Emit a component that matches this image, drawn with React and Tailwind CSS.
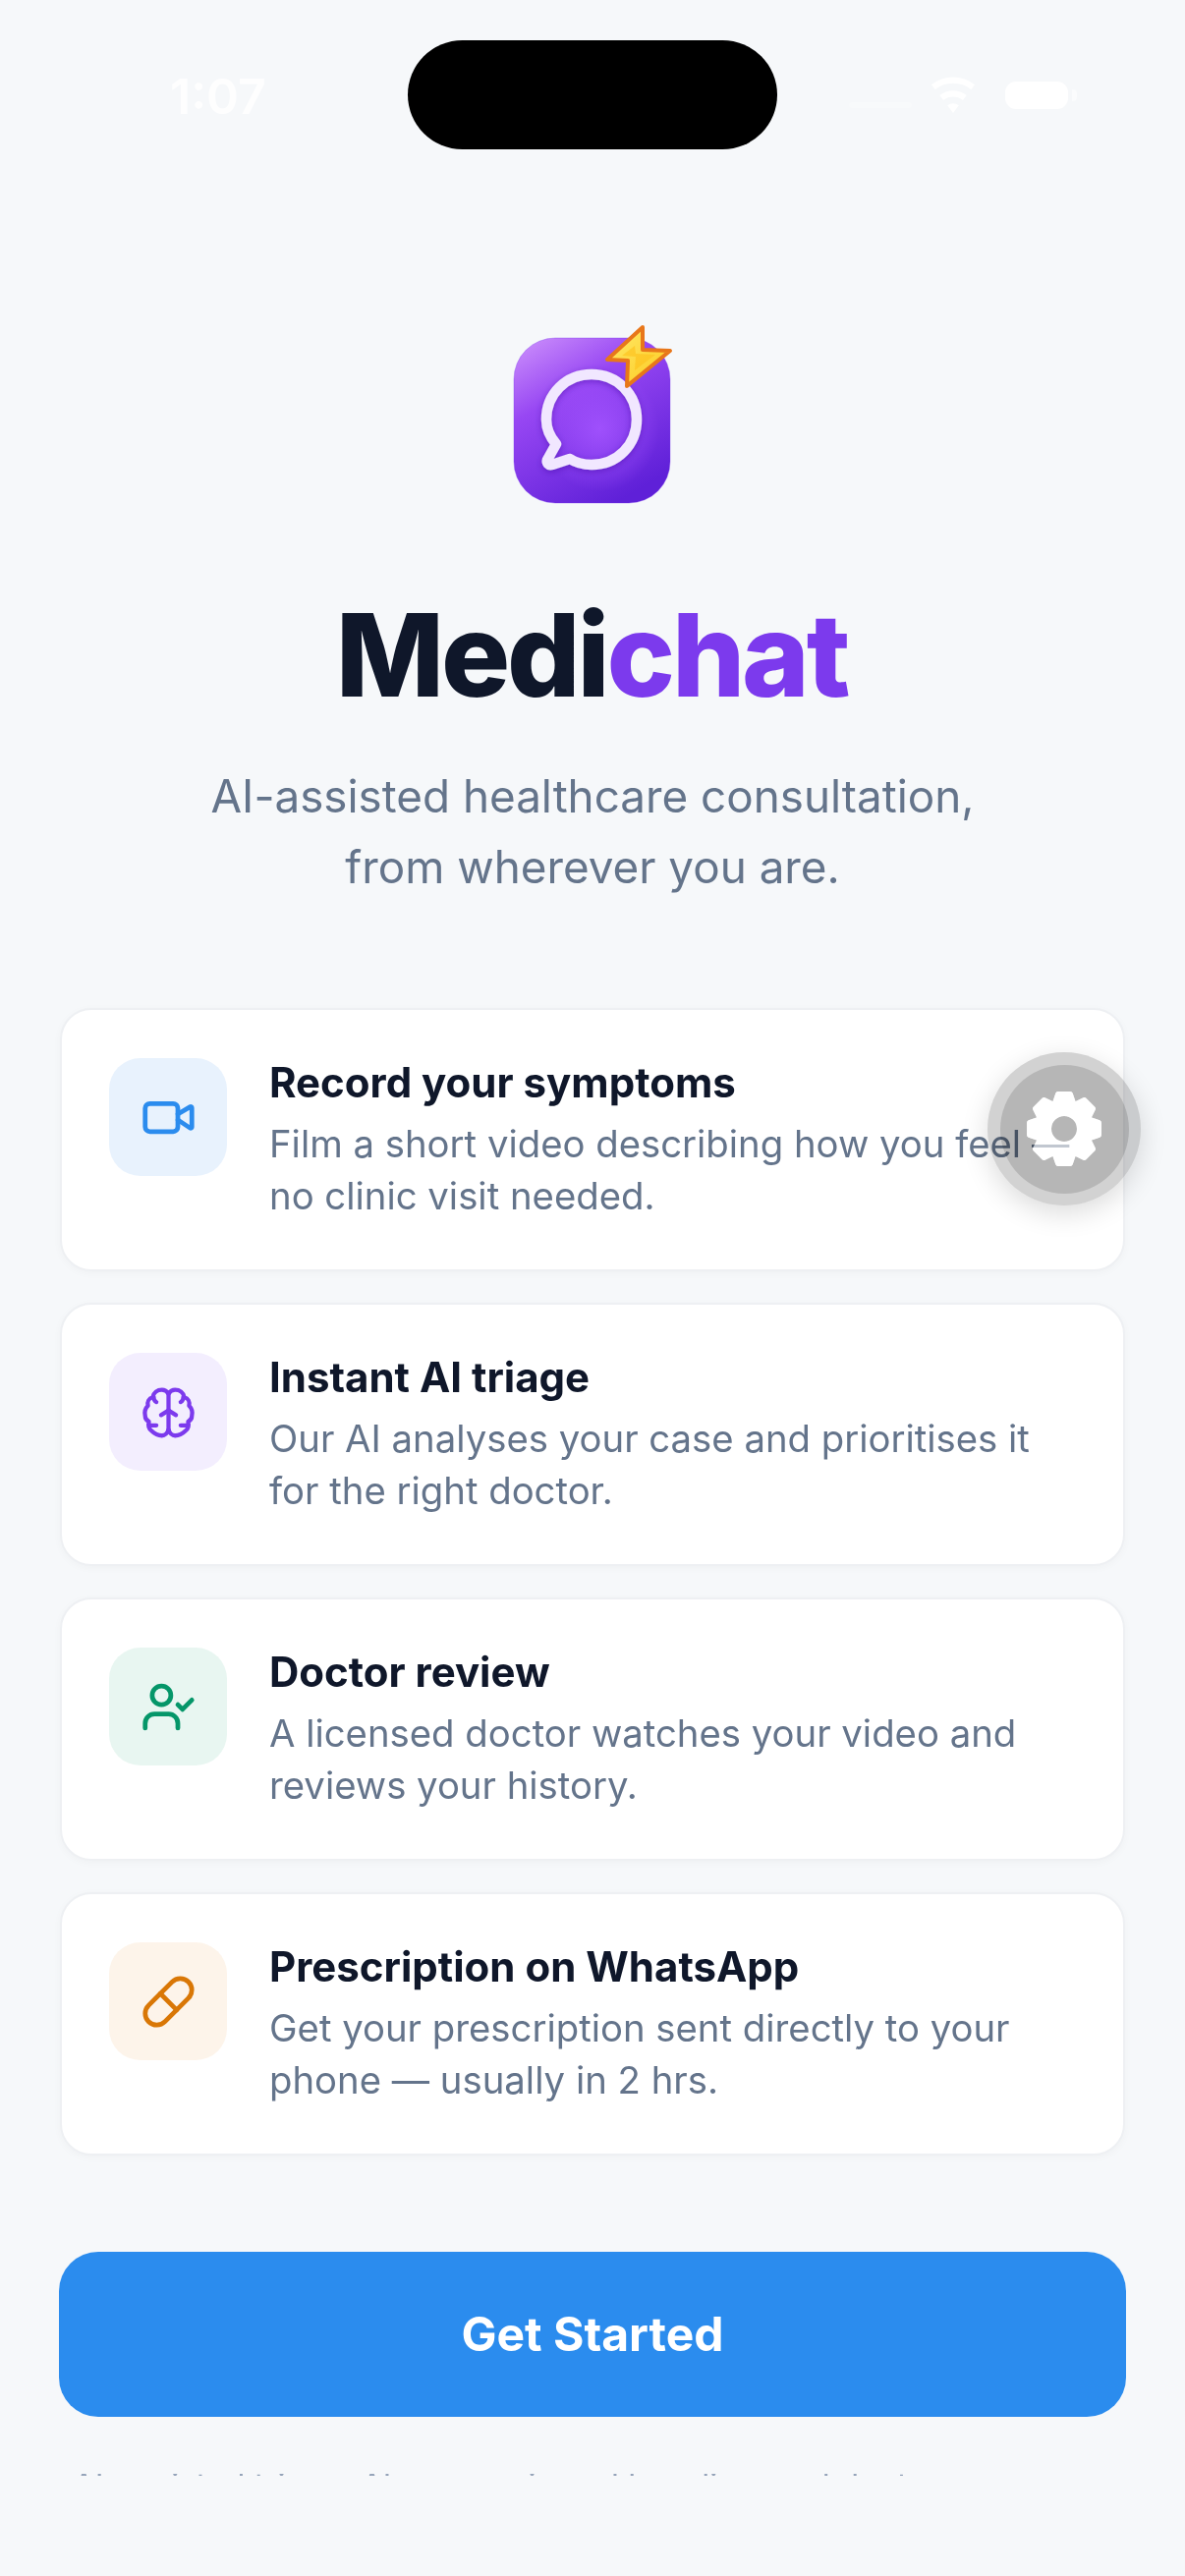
import { Video, UserCheck, Pill } from 'lucide-react'

// lucide's current brain differs from the one in the design, so drawn by hand
function BrainIcon({ className }) {
    const half = 'M30 10 C28 7 26 6 23 6 C18 6 14 9 13 14 C9 15 7 19 8 23 C5 26 4 30 5 34 C5 37 7 39 9 40 C8 44 9 48 12 50 C15 53 19 55 23 55 C26 55 29 52 30 49 M17 44 H11 M14 13 C14 16 15 18 17 19 M22 33 L30 28'
    return (
        <svg viewBox="0 0 60 60" className={className} fill="none" stroke="currentColor" strokeWidth="4.5" strokeLinecap="round" strokeLinejoin="round">
            <path d={half} />
            <path d={half} transform="matrix(-1 0 0 1 60 0)" />
            <path d="M30 10 V49" />
        </svg>
    )
}

const steps = [
    { title: 'Record your symptoms', desc: 'Film a short video describing how you feel — no clinic visit needed.', Icon: Video, box: 'bg-[#e8f2fd]', color: 'text-[#2b8cee]' },
    { title: 'Instant AI triage', desc: 'Our AI analyses your case and prioritises it for the right doctor.', Icon: BrainIcon, box: 'bg-[#f3eefe]', color: 'text-[#7c3aed]' },
    { title: 'Doctor review', desc: 'A licensed doctor watches your video and reviews your history.', Icon: UserCheck, box: 'bg-[#e8f6f1]', color: 'text-[#059669]' },
    { title: 'Prescription on WhatsApp', desc: 'Get your prescription sent directly to your phone — usually in 2 hrs.', Icon: Pill, box: 'bg-[#fdf4ea]', color: 'text-[#d97706]' },
]

// 8 tooth gear, built once from polar points
function gearPath(cx, cy) {
    const pts = []
    for (let i = 0; i < 8; i++) {
        const a = (i * Math.PI) / 4 - Math.PI / 2
        const d = Math.PI / 8
        pts.push([a - d * 0.95, 27], [a - d * 0.45, 36], [a + d * 0.45, 36], [a + d * 0.95, 27])
    }
    const outer = pts.map(([a, r], i) => `${i ? 'L' : 'M'}${(cx + r * Math.cos(a)).toFixed(2)} ${(cy + r * Math.sin(a)).toFixed(2)}`).join(' ') + ' Z'
    return `${outer} M${cx + 15.5} ${cy} A15.5 15.5 0 1 0 ${cx - 15.5} ${cy} A15.5 15.5 0 1 0 ${cx + 15.5} ${cy} Z`
}

function Gear({ className }) {
    return (
        <svg viewBox="0 0 80 80" className={className}>
            <path d={gearPath(40, 40)} fill="#fff" fillRule="evenodd" stroke="#fff" strokeWidth="5" strokeLinejoin="round" />
        </svg>
    )
}

function Logo() {
    return (
        <svg viewBox="0 0 170 185" className="w-[170px] h-[185px]">
            <defs>
                <linearGradient id="tile" x1="0.1" y1="0" x2="0.65" y2="1">
                    <stop offset="0" stopColor="#c98bfb" />
                    <stop offset="0.35" stopColor="#9747f3" />
                    <stop offset="1" stopColor="#5f20d8" />
                </linearGradient>
                <radialGradient id="glow" cx="0.55" cy="0.55" r="0.38">
                    <stop offset="0" stopColor="#9f50fc" />
                    <stop offset="1" stopColor="#9f50fc" stopOpacity="0" />
                </radialGradient>
                <linearGradient id="bolt" x1="0" y1="0" x2="1" y2="1">
                    <stop offset="0" stopColor="#ffeb6b" />
                    <stop offset="1" stopColor="#fcc81c" />
                </linearGradient>
                <filter id="ringShadow" x="-20%" y="-20%" width="140%" height="140%">
                    <feDropShadow dx="0" dy="2" stdDeviation="3" floodColor="#3b0f9e" floodOpacity="0.45" />
                </filter>
            </defs>
            <rect x="3" y="14" width="159" height="168" rx="42" fill="url(#tile)" stroke="#7c3aed" strokeOpacity="0.35" />
            <rect x="3" y="14" width="159" height="168" rx="42" fill="url(#glow)" />
            <path
                d="M82 51 C108 51 128 71 128 97 C128 123 108 143 82 143 C73 143 66 141 60 137 L42 143 C38 144 36 141 37 138 L46 122 C40 115 36 106 36 97 C36 71 56 51 82 51 Z"
                fill="none"
                stroke="#f1e7ff"
                strokeWidth="10.5"
                strokeLinejoin="round"
                filter="url(#ringShadow)"
            />
            <path
                d="M134 3 L98 36 L119 37 L118 63 L162 27 L134 26 Z"
                fill="url(#bolt)"
                stroke="#e8771a"
                strokeWidth="4"
                strokeLinejoin="round"
            />
            <path d="M126 22 L113 32 L127 33 L126 47 L147 31 L127 30 Z" fill="#fdc01a" opacity="0.6" />
        </svg>
    )
}

function StatusBar() {
    return (
        <div className="h-[198px] relative shrink-0">
            <div className="absolute left-[415px] top-[41px] w-[376px] h-[111px] bg-black rounded-[56px]" />
            <span className="absolute left-[173px] top-[68px] text-[50px] leading-[60px] font-semibold text-white/90">1:07</span>
            <div className="absolute left-[864px] top-[104px] w-[64px] h-[6px] bg-white/25 rounded-sm" />
            <svg viewBox="0 0 24 24" className="absolute left-[943px] top-[70px] w-[54px] h-[54px] text-white" fill="currentColor">
                <path d="M12 20l-2.6-3.4a4.4 4.4 0 0 1 5.2 0z" />
                <path d="M7.6 14.2a7.2 7.2 0 0 1 8.8 0l1.7-2.2a10 10 0 0 0-12.2 0z" />
                <path d="M3.9 9.4a13 13 0 0 1 16.2 0l1.7-2.2a15.8 15.8 0 0 0-19.6 0z" />
            </svg>
            <div className="absolute left-[1023px] top-[83px] w-[64px] h-[28px] bg-white rounded-[11px]" />
            <div className="absolute left-[1091px] top-[91px] w-[5px] h-[12px] bg-white/50 rounded-r" />
        </div>
    )
}

export default function App() {
    return (
        <div className="relative w-[1206px] h-[2622px] overflow-hidden bg-[#f6f8fa] flex flex-col font-['Inter',sans-serif]">
            <StatusBar />

            <div className="flex flex-col items-center">
                <div className="pt-[132px] ml-[4px]">
                    <Logo />
                </div>
                <h1 className="mt-[82px] -ml-[2px] text-[117px] leading-[140px] font-extrabold tracking-[-3.2px] text-[#0f172a]">
                    Medi<span className="text-[#7c3aed]">chat</span>
                </h1>
                <p className="mt-[38px] text-[45.8px] leading-[72px] text-[#64748b] text-center">
                    AI-assisted healthcare consultation,<br />from wherever you are.
                </p>
            </div>

            <div className="mt-[107px] px-[61px] flex flex-col gap-[32px]">
                {steps.map((s) => (
                    <div key={s.title} className="h-[268px] bg-white border-2 border-[#eef0f3] rounded-[32px] shadow-[0_2px_8px_rgba(15,23,42,0.03)] p-[48px] flex items-start gap-[43px]">
                        <div className={`w-[120px] h-[120px] mt-[1px] rounded-[32px] shrink-0 flex items-center justify-center ${s.box}`}>
                            <s.Icon className={`w-[57px] h-[57px] ${s.color}`} strokeWidth={s.Icon === BrainIcon ? undefined : 2} />
                        </div>
                        <div className="min-w-0 -mt-[3px]">
                            <h2 className="text-[42px] leading-[58px] font-bold text-[#0f172a]">{s.title}</h2>
                            <p className="mt-[7px] text-[38.3px] leading-[53px] text-[#64748b]">{s.desc}</p>
                        </div>
                    </div>
                ))}
            </div>

            <div className="mt-[98px] px-[60px] shrink-0">
                <button className="w-full h-[168px] rounded-[40px] bg-[#2b8cee] text-white text-[48px] font-bold">
                    Get Started
                </button>
            </div>

            {/* footer line is cut off by the screen edge in the reference, only the tips show */}
            <div className="mt-[58px] px-[74px] h-[2px] overflow-hidden shrink-0">
                <p className="text-[33px] leading-[44px] -mt-[11px] text-[#94a3b8] whitespace-nowrap">
                    AI-assisted triage. Always reviewed by a licensed doctor.
                </p>
            </div>

            {/* floating settings button, multiply lets the card text show through */}
            <div className="absolute left-[1005px] top-[1071px] w-[156px] h-[156px] mix-blend-multiply">
                <div className="w-full h-full rounded-full bg-[#d2d2d2] shadow-[0_8px_28px_rgba(0,0,0,0.14)] flex items-center justify-center relative">
                    <div className="w-[131px] h-[131px] rounded-full bg-[#b6b6b6]" />
                    <Gear className="absolute left-[38px] top-[38px] w-[80px] h-[80px]" />
                </div>
            </div>
            <Gear className="absolute left-[1043px] top-[1109px] w-[80px] h-[80px] opacity-60" />
        </div>
    )
}
